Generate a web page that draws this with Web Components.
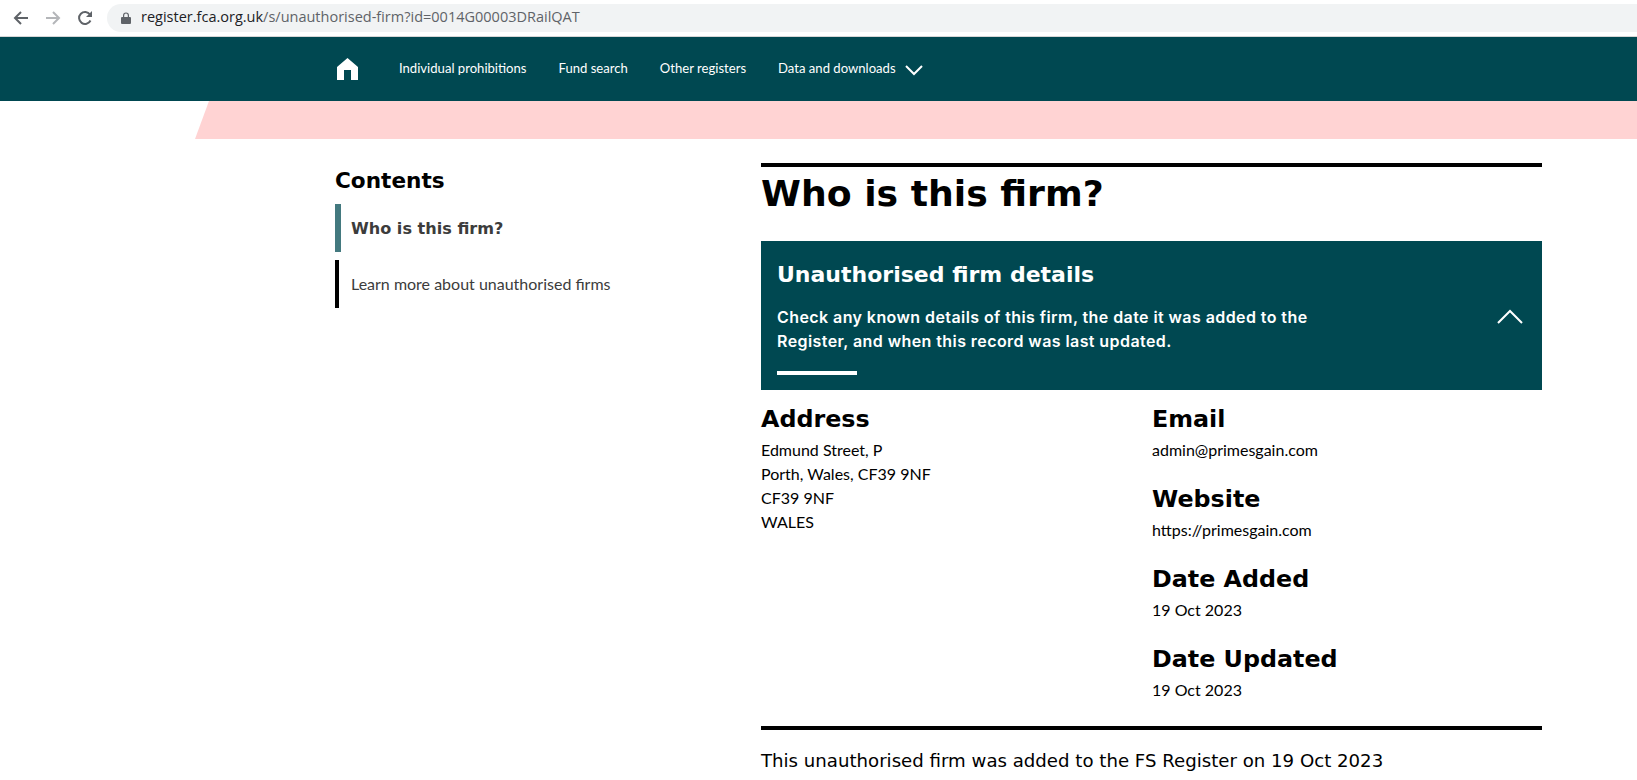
<!DOCTYPE html>
<html lang="en">
<head>
<meta charset="utf-8">
<title>Who is this firm?</title>
<style>
  html, body {
    margin: 0;
    height: 780px;
    overflow: hidden;
    background: #fff;
    color: #000;
    font-family: "Lato", "Liberation Sans", sans-serif;
  }
</style>
</head>
<body>
<browser-bar url-host="register.fca.org.uk" url-path="/s/unauthorised-firm?id=0014G00003DRailQAT"></browser-bar>
<site-nav>
  <a href="#">Individual prohibitions</a>
  <a href="#">Fund search</a>
  <a href="#">Other registers</a>
  <a href="#" data-menu>Data and downloads</a>
</site-nav>
<pink-band></pink-band>
<page-layout>
  <contents-nav slot="side" heading="Contents">
    <contents-item active>Who is this firm?</contents-item>
    <contents-item>Learn more about unauthorised firms</contents-item>
  </contents-nav>
  <firm-section heading="Who is this firm?" footer="This unauthorised firm was added to the FS Register on 19 Oct 2023">
    <details-panel heading="Unauthorised firm details">Check any known details of this firm, the date it was added to the<br>Register, and when this record was last updated.</details-panel>
    <detail-grid>
      <div slot="left">
        <detail-block heading="Address">Edmund Street, P<br>Porth, Wales, CF39 9NF<br>CF39 9NF<br>WALES</detail-block>
      </div>
      <div slot="right">
        <detail-block heading="Email">admin@primesgain.com</detail-block>
        <detail-block heading="Website">https://primesgain.com</detail-block>
        <detail-block heading="Date Added">19 Oct 2023</detail-block>
        <detail-block heading="Date Updated">19 Oct 2023</detail-block>
      </div>
    </detail-grid>
  </firm-section>
</page-layout>

<script>
  const heading = '"DejaVu Sans", Verdana, sans-serif';

  class BrowserBar extends HTMLElement {
    connectedCallback() {
      const host = this.getAttribute('url-host');
      const path = this.getAttribute('url-path');
      this.attachShadow({ mode: 'open' }).innerHTML = `
        <style>
          :host {
            display: flex;
            align-items: center;
            height: 36px;
            border-bottom: 1px solid #d6d6d6;
            background: #fff;
            padding-left: 13px;
          }
          svg { display: block; flex: none; }
          .icons { display: flex; align-items: center; gap: 16px; width: 94px; }
          .url {
            flex: 1;
            height: 28px;
            border-radius: 14px 0 0 14px;
            background: #f1f3f4;
            display: flex;
            align-items: center;
            padding-left: 14px;
            font: 14.5px/26px "Open Sans", "Liberation Sans", sans-serif;
            color: #5f6368;
          }
          .url svg { margin-right: 10px; }
          .url span { margin-top: -2px; }
          b { font-weight: 400; color: #202124; }
        </style>
        <div class="icons">
          <svg width="16" height="16" viewBox="0 0 16 16" fill="none" stroke="#5f6368" stroke-width="2"><path d="M15 8H2M8 2 2 8l6 6"/></svg>
          <svg width="16" height="16" viewBox="0 0 16 16" fill="none" stroke="#b4b6b9" stroke-width="2"><path d="M1 8h13M8 2l6 6-6 6"/></svg>
          <svg width="16" height="16" viewBox="0 0 16 16" fill="none" stroke="#5f6368" stroke-width="2"><path d="M13.5 10.5A6 6 0 1 1 13 4.5"/><path fill="#5f6368" stroke="none" d="M15 1v6H9z"/></svg>
        </div>
        <div class="url">
          <svg width="10" height="12" viewBox="0 0 10 12"><path fill="#5f6368" d="M1 5h1V3.4a3 3 0 0 1 6 0V5h1a1 1 0 0 1 1 1v5a1 1 0 0 1-1 1H1a1 1 0 0 1-1-1V6a1 1 0 0 1 1-1zm2.2 0h3.6V3.4a1.8 1.8 0 0 0-3.6 0z"/></svg>
          <span><b>${host}</b>${path}</span>
        </div>`;
    }
  }

  class SiteNav extends HTMLElement {
    connectedCallback() {
      this.attachShadow({ mode: 'open' }).innerHTML = `
        <style>
          :host {
            display: flex;
            align-items: center;
            height: 64px;
            padding-left: 337px;
            background: #004851;
            font: 13.1px "Lato", "Liberation Sans", sans-serif;
            color: #fff;
          }
          svg { display: block; flex: none; }
          .home { margin-right: 41px; }
          .links { display: flex; align-items: center; gap: 32px; margin-top: -3px; }
          ::slotted(a) { color: #fff; text-decoration: none; }
          .chev { margin-left: 9px; margin-top: 2px; }
        </style>
        <svg class="home" width="21" height="22" viewBox="0 0 21 22"><path fill="#fff" d="M10.5 0 21 9v13h-7V12H7v10H0V9z"/></svg>
        <div class="links"><slot></slot></div>
        <svg class="chev" width="18" height="11" viewBox="0 0 18 11" fill="none" stroke="#fff" stroke-width="2"><path d="m1 1 8 8 8-8"/></svg>`;
    }
  }

  class PinkBand extends HTMLElement {
    connectedCallback() {
      this.attachShadow({ mode: 'open' }).innerHTML = `
        <style>
          :host {
            display: block;
            height: 38px;
            margin-left: 195px;
            background: #ffd3d3;
            clip-path: polygon(14px 0, 100% 0, 100% 100%, 0 100%);
          }
        </style>`;
    }
  }

  class PageLayout extends HTMLElement {
    connectedCallback() {
      this.attachShadow({ mode: 'open' }).innerHTML = `
        <style>
          :host {
            display: grid;
            grid-template-columns: 426px 781px;
            padding: 24px 0 0 335px;
          }
        </style>
        <slot name="side"></slot>
        <slot></slot>`;
    }
  }

  class ContentsNav extends HTMLElement {
    connectedCallback() {
      this.attachShadow({ mode: 'open' }).innerHTML = `
        <style>
          :host { display: block; }
          h2 {
            margin: 0 0 10px;
            padding-top: 5px;
            font: bold 21.6px/26px ${heading};
            color: #000;
          }
          .list { display: flex; flex-direction: column; gap: 8px; }
        </style>
        <h2>${this.getAttribute('heading')}</h2>
        <div class="list"><slot></slot></div>`;
    }
  }

  class ContentsItem extends HTMLElement {
    connectedCallback() {
      this.attachShadow({ mode: 'open' }).innerHTML = `
        <style>
          :host {
            display: flex;
            align-items: center;
            height: 48px;
            box-sizing: border-box;
            border-left: 4px solid #000;
            padding: 0 0 2px 12px;
            font: 16px "Lato", "Liberation Sans", sans-serif;
            color: #3c3c3c;
          }
          :host([active]) {
            border-left: 6px solid #43797f;
            padding: 0 0 0 10px;
            font: bold 16.1px ${heading};
          }
        </style>
        <slot></slot>`;
    }
  }

  class FirmSection extends HTMLElement {
    connectedCallback() {
      this.attachShadow({ mode: 'open' }).innerHTML = `
        <style>
          :host { display: block; }
          .rule { height: 4px; background: #000; }
          h1 {
            margin: 0;
            height: 74px;
            font: bold 36.2px/53px ${heading};
            color: #000;
          }
          .end { margin-top: 3px; }
          p { margin: 0; padding-top: 20px; font: 18.15px/22px ${heading}; color: #000; }
        </style>
        <div class="rule"></div>
        <h1>${this.getAttribute('heading')}</h1>
        <slot></slot>
        <div class="rule end"></div>
        <p>${this.getAttribute('footer')}</p>`;
    }
  }

  class DetailsPanel extends HTMLElement {
    connectedCallback() {
      this.attachShadow({ mode: 'open' }).innerHTML = `
        <style>
          :host {
            display: flex;
            justify-content: space-between;
            align-items: flex-start;
            height: 149px;
            box-sizing: border-box;
            padding: 21px 19px 0 16px;
            background: #004851;
            color: #fff;
          }
          h2 { margin: 0 0 17px; font: bold 22px/26px ${heading}; }
          .text { font: 600 16px/24px "Inter", "Open Sans", sans-serif; letter-spacing: .42px; }
          .bar { width: 80px; height: 4px; margin-top: 18px; background: #fff; }
          svg { display: block; margin-top: 47px; }
        </style>
        <div>
          <h2>${this.getAttribute('heading')}</h2>
          <div class="text"><slot></slot></div>
          <div class="bar"></div>
        </div>
        <svg width="26" height="15" viewBox="0 0 26 15" fill="none" stroke="#fff" stroke-width="2"><path d="m1 14 12-12 12 12"/></svg>`;
    }
  }

  class DetailGrid extends HTMLElement {
    connectedCallback() {
      this.attachShadow({ mode: 'open' }).innerHTML = `
        <style>
          :host {
            display: grid;
            grid-template-columns: 391px 1fr;
            padding-top: 13px;
          }
        </style>
        <slot name="left"></slot>
        <slot name="right"></slot>`;
    }
  }

  class DetailBlock extends HTMLElement {
    connectedCallback() {
      this.attachShadow({ mode: 'open' }).innerHTML = `
        <style>
          :host { display: block; min-height: 80px; }
          h3 { margin: 0 0 3px; font: bold 23.8px/32px ${heading}; color: #000; }
          div { font: 16px/24px "Lato", "Liberation Sans", sans-serif; color: #000; }
        </style>
        <h3>${this.getAttribute('heading')}</h3>
        <div><slot></slot></div>`;
    }
  }

  customElements.define('browser-bar', BrowserBar);
  customElements.define('site-nav', SiteNav);
  customElements.define('pink-band', PinkBand);
  customElements.define('page-layout', PageLayout);
  customElements.define('contents-nav', ContentsNav);
  customElements.define('contents-item', ContentsItem);
  customElements.define('firm-section', FirmSection);
  customElements.define('details-panel', DetailsPanel);
  customElements.define('detail-grid', DetailGrid);
  customElements.define('detail-block', DetailBlock);
</script>
</body>
</html>
